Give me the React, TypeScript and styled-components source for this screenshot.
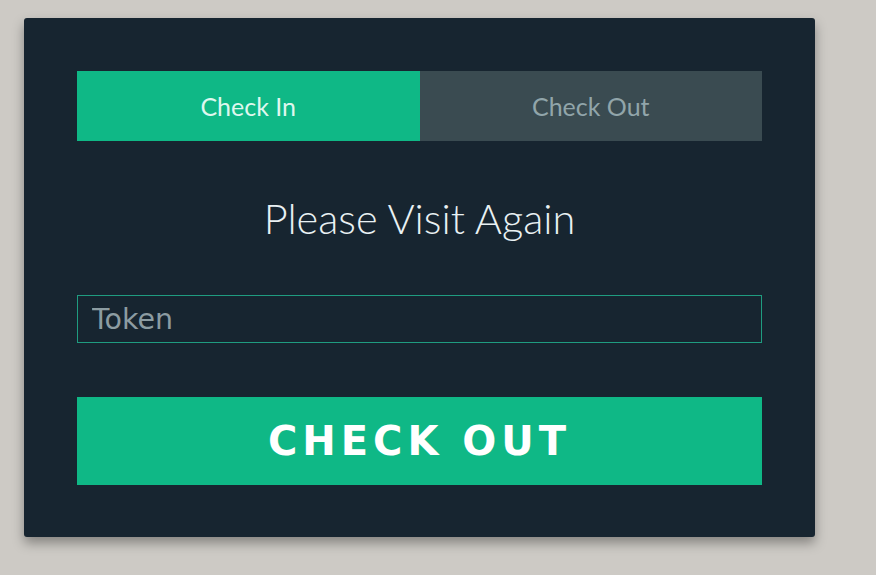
import React from "react";
import styled, { createGlobalStyle } from "styled-components";

const Global = createGlobalStyle`
  html, body { margin: 0; padding: 0; background: #cdcac5; }
  body { font-family: "Lato", "DejaVu Sans", sans-serif; }
`;

const Page = styled.div`
  padding: 18px 0 0 24px;
  height: 575px;
  box-sizing: border-box;
`;

const Card = styled.div`
  width: 791px;
  height: 519px;
  box-sizing: border-box;
  background: #172530;
  border-radius: 3px;
  box-shadow: 0 6px 12px rgba(0, 0, 0, 0.35);
  padding: 53px 53px 52px 53px;
  display: flex;
  flex-direction: column;
`;

const Tabs = styled.div`
  display: grid;
  grid-template-columns: 1fr 1fr;
  height: 70px;
`;

const Tab = styled.div<{ $active?: boolean }>`
  display: flex;
  align-items: center;
  justify-content: center;
  background: ${(p) => (p.$active ? "#0fb886" : "#3a4b51")};
  color: ${(p) => (p.$active ? "#dff7ee" : "#91a5aa")};
  font-family: "Lato", sans-serif;
  font-size: 25px;
  font-weight: 400;
`;

const TitleArea = styled.div`
  height: 154px;
  display: flex;
  align-items: center;
  justify-content: center;
`;

const Title = styled.h1`
  margin: 0;
  font-family: "Lato", sans-serif;
  font-weight: 300;
  font-size: 41.5px;
  color: #e9f1f3;
`;

const Input = styled.input`
  height: 48px;
  box-sizing: border-box;
  background: transparent;
  border: 1px solid #1f9c80;
  outline: none;
  padding: 0 14px;
  font-family: "DejaVu Sans", "Verdana", sans-serif;
  font-size: 28.5px;
  color: #e9f1f3;
  &::placeholder {
    color: #8c9ca2;
    font-family: "DejaVu Sans", "Verdana", sans-serif;
  }
`;

const Button = styled.button`
  margin-top: 54px;
  height: 88px;
  border: none;
  background: #0fb886;
  color: #ffffff;
  font-family: "DejaVu Sans", sans-serif;
  font-weight: bold;
  font-size: 40px;
  letter-spacing: 5px;
  cursor: pointer;
`;

export default function App() {
  return (
    <>
      <Global />
      <Page>
        <Card>
          <Tabs>
            <Tab $active>Check In</Tab>
            <Tab>Check Out</Tab>
          </Tabs>
          <TitleArea>
            <Title>Please Visit Again</Title>
          </TitleArea>
          <Input placeholder="Token" />
          <Button>CHECK OUT</Button>
        </Card>
      </Page>
    </>
  );
}
